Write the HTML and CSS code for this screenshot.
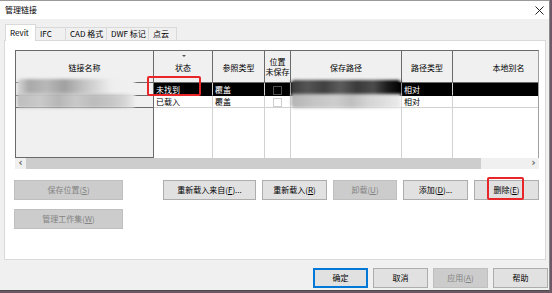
FILE: index.html
```html
<!DOCTYPE html>
<html lang="zh-CN">
<head>
    <meta charset="UTF-8">
    <meta name="viewport" content="width=device-width, initial-scale=1.0">
    <title>管理链接</title>
    <link rel="stylesheet" href="styles.css">
</head>
<body>
    <div class="window">
        <div class="titlebar">
            <span class="title">管理链接</span>
            <svg class="close" width="9" height="9" viewBox="0 0 9 9"><path d="M0.5 0.5 L8.5 8.5 M8.5 0.5 L0.5 8.5" stroke="#222" stroke-width="1" fill="none"/></svg>
        </div>

        <div class="tabs">
            <div class="tab active">Revit</div>
            <div class="tab w-ifc">IFC</div>
            <div class="tab w-cad">CAD 格式</div>
            <div class="tab w-dwf">DWF 标记</div>
            <div class="tab w-pc">点云</div>
        </div>

        <div class="panel">
            <div class="grid">
                <table class="links">
                    <colgroup>
                        <col style="width:138px">
                        <col style="width:59px">
                        <col style="width:52px">
                        <col style="width:26px">
                        <col style="width:111px">
                        <col style="width:51px">
                        <col style="width:112px">
                    </colgroup>
                    <thead>
                        <tr>
                            <th class="name">链接名称</th>
                            <th class="sorted">状态</th>
                            <th>参照类型</th>
                            <th class="two">位置<br>未保存</th>
                            <th>保存路径</th>
                            <th>路径类型</th>
                            <th>本地别名</th>
                        </tr>
                    </thead>
                    <tbody>
                        <tr class="sel">
                            <th class="name"></th>
                            <td class="missing">未找到</td>
                            <td>覆盖</td>
                            <td class="chk"><span class="box"></span></td>
                            <td></td>
                            <td>相对</td>
                            <td></td>
                        </tr>
                        <tr class="r2">
                            <th class="name"></th>
                            <td>已载入</td>
                            <td>覆盖</td>
                            <td class="chk"><span class="box"></span></td>
                            <td></td>
                            <td>相对</td>
                            <td></td>
                        </tr>
                        <tr class="filler">
                            <th class="name"></th>
                            <td></td>
                            <td></td>
                            <td></td>
                            <td></td>
                            <td></td>
                            <td></td>
                        </tr>
                    </tbody>
                </table>
                <!-- redacted names and paths -->
                <div class="blur blur-name"></div>
                <div class="blur blur-path"></div>
                <div class="mark mark-status"></div>
            </div>

            <div class="hscroll">
                <span class="arr">&#8249;</span>
                <div class="track"><div class="thumb"></div></div>
                <span class="arr">&#8250;</span>
            </div>

            <div class="actions">
                <div class="left-btns">
                    <button class="btn wide" disabled>保存位置(<u>S</u>)</button>
                    <button class="btn wide" disabled>管理工作集(<u>W</u>)</button>
                </div>
                <div class="right-btns">
                    <button class="btn b-reload-from">重新载入来自(<u>F</u>)...</button>
                    <button class="btn b-reload">重新载入(<u>R</u>)</button>
                    <button class="btn b-unload" disabled>卸载(<u>U</u>)</button>
                    <button class="btn b-add">添加(<u>D</u>)...</button>
                    <button class="btn b-del">删除(<u>E</u>)<span class="mark mark-del"></span></button>
                </div>
            </div>
        </div>

        <div class="footer">
            <button class="btn dlg default">确定</button>
            <button class="btn dlg">取消</button>
            <button class="btn dlg" disabled>应用(<u>A</u>)</button>
            <button class="btn dlg">帮助</button>
        </div>
    </div>
</body>
</html>
```

FILE: styles.css
```css
body {
    margin: 0;
    background: #6e5866;
    font-family: "Noto Sans CJK SC", "Noto Sans", sans-serif;
    font-size: 8px;
    color: #000;
}

.window {
    width: 550px;
    box-sizing: border-box;
    background: #f0f0f0;
    border-top: 1px solid #9a9a9a;
    border-right: 1px solid #8a8a8a;
    border-bottom: 1px solid #4a4a4a;
}

/* title bar */
.titlebar {
    height: 18px;
    background: #fff;
    display: flex;
    align-items: center;
    justify-content: space-between;
    padding: 0 5px;
    line-height: 10px;
}

/* tabs */
.tabs {
    display: flex;
    align-items: flex-end;
    height: 16px;
    margin-top: 5px;
    padding-left: 5px;
    position: relative;
    z-index: 1;
}
.tab {
    height: 13px;
    box-sizing: border-box;
    border: 1px solid #d9d9d9;
    border-bottom: none;
    border-left: none;
    background: #f0f0f0;
    line-height: 12px;
    padding-left: 4px;
}
.tab.active {
    width: 31px;
    height: 17px;
    margin-bottom: -1px;
    background: #fff;
    border-left: 1px solid #d9d9d9;
    line-height: 15px;
}
.w-ifc { width: 30px; }
.w-cad { width: 41px; }
.w-dwf { width: 42px; }
.w-pc { width: 28px; }

/* tab page */
.panel {
    margin: 0 3px 0 4px;
    background: #fff;
    border: 1px solid #d9d9d9;
    padding: 9px 0 30px 10px;
}

.grid {
    position: relative;
    width: 524px;
    box-sizing: border-box;
    overflow: hidden;
    border-top: 1px solid #6a6a6a;
    border-left: 1px solid #6a6a6a;
    border-right: 1px solid #a0a0a0;
}
.links {
    table-layout: fixed;
    border-collapse: separate;
    border-spacing: 0;
    width: 549px;
}
.links th,
.links td {
    padding: 0 2px;
    font-weight: normal;
    white-space: nowrap;
    overflow: hidden;
    line-height: 11px;
    box-sizing: border-box;
}
.links thead th {
    height: 32px;
    background: #f0f0f0;
    text-align: center;
    border-right: 1px solid #6a6a6a;
    border-bottom: 1px solid #6a6a6a;
    padding-top: 1px;
}
.links thead th.two {
    padding: 1px 0 0;
    line-height: 10px;
}
.links thead th.sorted { position: relative; }
.links thead th.sorted::before {
    content: "";
    position: absolute;
    left: 28px;
    top: 4px;
    border-left: 2px solid transparent;
    border-right: 2px solid transparent;
    border-top: 2px solid #555;
}

.links tbody th.name {
    background: #f0f0f0;
    border-right: 1px solid #6a6a6a;
    border-bottom: 1px solid #6a6a6a;
}
.links tbody td {
    border-right: 1px solid #d2d2d2;
    border-bottom: 1px solid #d2d2d2;
}
.links tr.sel td { height: 13px; background: #000; color: #fff; border-bottom-color: #000; }
.links tr.sel th { height: 13px; }
.links tr.r2 td, .links tr.r2 th { height: 12px; }
.links tr.filler td, .links tr.filler th { height: 50px; }
.links tr.filler td { border-bottom: none; }
.links td.missing { color: #16b4b4; }
.links td.chk { text-align: center; padding: 0; }

.box {
    display: inline-block;
    width: 9px;
    height: 9px;
    box-sizing: border-box;
    border: 1px solid #cfcfcf;
    vertical-align: middle;
}
.sel .box { border-color: #505050; }

.blur {
    position: absolute;
    filter: blur(1.5px);
    border-radius: 4px;
}
.blur-name {
    left: 1px;
    top: 28px;
    width: 118px;
    height: 29px;
    background:
        linear-gradient(90deg, #d9d9d9 0, #a9a9a9 10%, #b8b8b8 25%, #a0a0a0 40%, #c0c0c0 55%, #dcdcdc 70%, #eeeeee 80%, #f0f0f0 100%) 0 0 / 100% 50% no-repeat,
        linear-gradient(90deg, #bdbdbd 0, #c9c9c9 20%, #b6b6b6 35%, #c8c8c8 50%, #bcbcbc 65%, #c6c6c6 80%, #d6d6d6 92%, #ececec 100%) 0 100% / 100% 50% no-repeat;
}
.blur-path {
    left: 275px;
    top: 29px;
    width: 110px;
    height: 28px;
    background:
        linear-gradient(90deg, #3c3c3c 0, #555 15%, #404040 30%, #5c5c5c 45%, #3a3a3a 60%, #4c4c4c 75%, #1a1a1a 88%, #000 100%) 0 0 / 100% 50% no-repeat,
        linear-gradient(90deg, #b4b4b4 0, #c4c4c4 20%, #cdcdcd 40%, #bfbfbf 55%, #d4d4d4 70%, #dedede 85%, #ececec 100%) 0 100% / 100% 50% no-repeat;
}

.mark {
    position: absolute;
    border: 2px solid #e8262a;
    border-radius: 2px;
    box-sizing: border-box;
    pointer-events: none;
}
.mark-status { left: 131px; top: 25px; width: 54px; height: 20px; }

/* horizontal scroll bar */
.hscroll {
    width: 524px;
    height: 11px;
    display: flex;
    background: #f0f0f0;
}
.arr {
    width: 11px;
    text-align: center;
    line-height: 10px;
    font-size: 10px;
    font-weight: bold;
    color: #606060;
    font-family: "DejaVu Sans", sans-serif;
}
.track { flex: 1; }
.thumb { width: 455px; height: 100%; background: #cdcdcd; }

/* buttons */
.btn {
    height: 20px;
    box-sizing: border-box;
    border: 1px solid #adadad;
    background: #e1e1e1;
    font-family: inherit;
    font-size: 8px;
    color: #000;
    padding: 0;
    line-height: 10px;
    position: relative;
    vertical-align: top;
}
.btn:disabled {
    background: #cccccc;
    border-color: #bfbfbf;
    color: #838383;
}

.actions {
    display: flex;
    margin-top: 11px;
}
.left-btns {
    display: flex;
    flex-direction: column;
    gap: 9px;
    margin-left: -1px;
}
.wide { width: 109px; }
.right-btns {
    display: flex;
    gap: 6px;
    margin-left: 40px;
    align-items: flex-start;
}
.b-reload-from { width: 93px; }
.b-reload { width: 65px; }
.b-unload { width: 64px; }
.b-add { width: 65px; }
.b-del { width: 65px; }
.mark-del { left: 12px; top: -4px; width: 37px; height: 23px; }

.footer {
    display: flex;
    justify-content: flex-end;
    gap: 5px;
    padding: 8px 1px 2px 0;
}
.dlg { width: 55px; }
.default { border-color: #0078d7; box-shadow: inset 0 0 0 1px #0078d7; }
```
